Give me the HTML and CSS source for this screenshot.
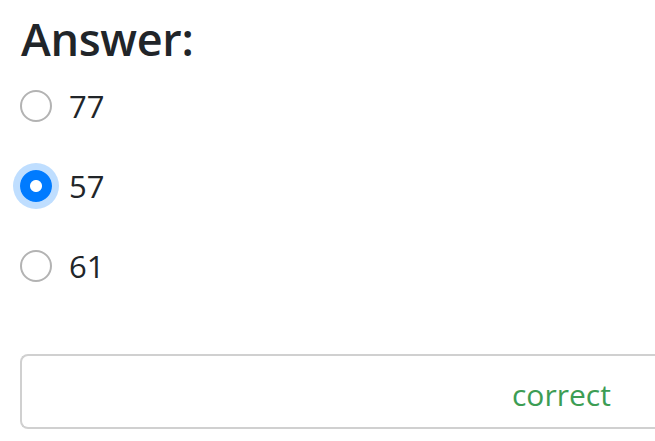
FILE: index.html
```html
<!DOCTYPE html>
<html>

<head>
    <meta charset="UTF-8">
    <meta name="viewport" content="width=device-width, initial-scale=1.0">
    <title>Quiz Answer</title>
    <link rel="stylesheet" href="styles.css">
</head>

<body>
    <div class="quiz-container">
        <h2 class="answer-title">Answer:</h2>
        <div class="answer-options">
            <label class="answer-option">
                <input type="radio" name="answer" value="77">
                <span>77</span>
            </label>
            <label class="answer-option">
                <input type="radio" name="answer" value="57" checked>
                <span>57</span>
            </label>
            <label class="answer-option">
                <input type="radio" name="answer" value="61">
                <span>61</span>
            </label>
        </div>
        <div class="result-box">
            <span class="result-text">correct</span>
        </div>
    </div>
</body>

</html>
```

FILE: styles.css
```css
body {
    font-family: "Open Sans", "Noto Sans", sans-serif;
    color: #212529;
    background-color: #fff;
    margin: 0;
    padding: 12px 0 0 20px;
}

.answer-title {
    font-size: 45px;
    font-weight: 600;
    line-height: 54px;
    margin: 0 0 0 1px;
    letter-spacing: -0.3px;
}

.answer-option {
    display: flex;
    align-items: center;
    gap: 17px;
    height: 80px;
    font-size: 31px;
}

.answer-option input {
    appearance: none;
    -webkit-appearance: none;
    width: 32px;
    height: 32px;
    margin: 0;
    border: 2px solid #b3b3b3;
    border-radius: 50%;
    background-color: #fff;
}

.answer-option input:checked {
    border-color: #007bff;
    background: radial-gradient(circle, #fff 0 5.5px, #007bff 6.5px);
    box-shadow: 0 0 0 7px #bfdeff;
}

/* box runs on past the right edge, so no right border here */
.result-box {
    margin-top: 48px;
    height: 75px;
    box-sizing: border-box;
    border: 2px solid #d0d0d0;
    border-right: none;
    border-radius: 8px 0 0 8px;
    display: flex;
    align-items: center;
    padding: 5px 0 0 490px;
}

.result-text {
    color: #3c9d54;
    font-size: 30px;
}
```
